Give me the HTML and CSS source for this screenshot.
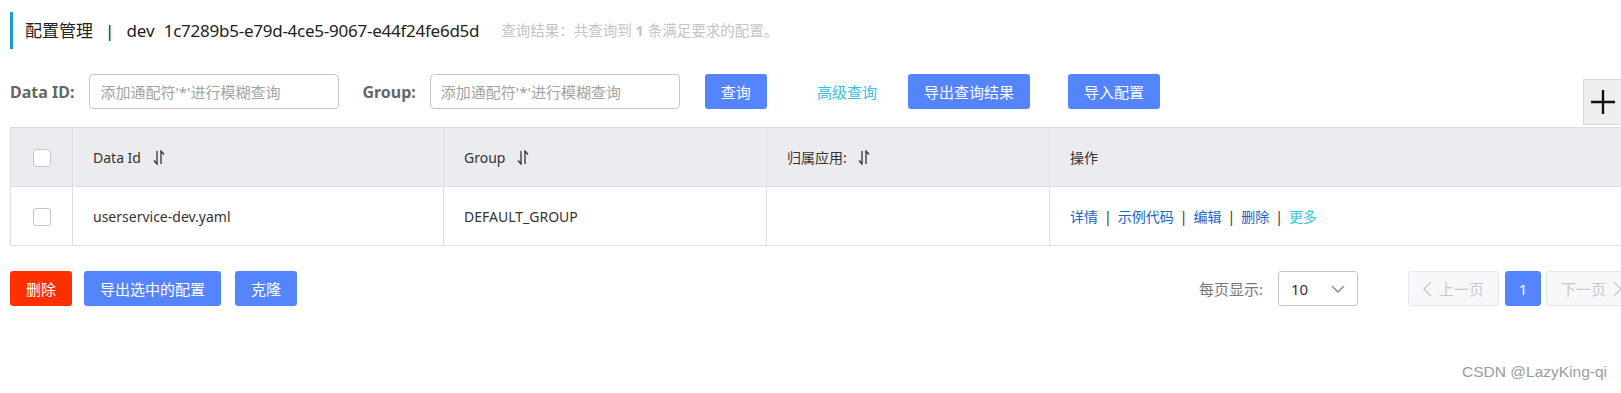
FILE: index.html
```html
<!DOCTYPE html>
<html lang="zh-CN">
<head>
  <meta charset="UTF-8">
  <title>配置管理</title>
  <link rel="stylesheet" href="styles.css">
</head>
<body>
  <div class="page">
    <div class="page-title">
      <span class="title-main">配置管理</span>
      <span class="title-sep">|</span>
      <span class="title-ns">dev</span>
      <span class="title-id">1c7289b5-e79d-4ce5-9067-e44f24fe6d5d</span>
      <span class="title-hint">查询结果：共查询到 <b>1</b> 条满足要求的配置。</span>
    </div>

    <div class="search-row">
      <label class="search-label" for="dataId">Data ID:</label>
      <input class="search-input" id="dataId" type="text" placeholder="添加通配符'*'进行模糊查询">
      <label class="search-label label-group" for="group">Group:</label>
      <input class="search-input" id="group" type="text" placeholder="添加通配符'*'进行模糊查询">
      <button class="btn btn-query">查询</button>
      <a class="link-advanced">高级查询</a>
      <button class="btn btn-export">导出查询结果</button>
      <button class="btn btn-import">导入配置</button>
    </div>

    <table class="config-table">
      <colgroup>
        <col style="width: 62px">
        <col style="width: 371px">
        <col style="width: 323px">
        <col style="width: 283px">
        <col>
      </colgroup>
      <thead>
        <tr>
          <th class="cell-check"><span class="checkbox"></span></th>
          <th>Data Id <svg class="sort-icon" width="12" height="15" viewBox="0 0 12 15"><path d="M4 1V14L1 10.5M8 14V1L11 4.5" fill="none" stroke="#333" stroke-width="1.3"/></svg></th>
          <th>Group <svg class="sort-icon" width="12" height="15" viewBox="0 0 12 15"><path d="M4 1V14L1 10.5M8 14V1L11 4.5" fill="none" stroke="#333" stroke-width="1.3"/></svg></th>
          <th>归属应用: <svg class="sort-icon" width="12" height="15" viewBox="0 0 12 15"><path d="M4 1V14L1 10.5M8 14V1L11 4.5" fill="none" stroke="#333" stroke-width="1.3"/></svg></th>
          <th>操作</th>
        </tr>
      </thead>
      <tbody>
        <tr>
          <td class="cell-check"><span class="checkbox"></span></td>
          <td>userservice-dev.yaml</td>
          <td>DEFAULT_GROUP</td>
          <td></td>
          <td class="ops">
            <a class="op">详情</a><span class="op-sep">|</span><a class="op">示例代码</a><span class="op-sep">|</span><a class="op">编辑</a><span class="op-sep">|</span><a class="op">删除</a><span class="op-sep">|</span><a class="op op-more">更多</a>
          </td>
        </tr>
      </tbody>
    </table>

    <div class="footer-row">
      <button class="btn btn-danger">删除</button>
      <button class="btn btn-export-sel">导出选中的配置</button>
      <button class="btn btn-clone">克隆</button>

      <div class="pager">
        <span class="pager-label">每页显示:</span>
        <div class="page-size">
          <span>10</span>
          <svg width="14" height="8" viewBox="0 0 14 8"><path d="M1 1L7 7L13 1" fill="none" stroke="#888" stroke-width="1.4"/></svg>
        </div>
        <button class="pager-btn pager-prev" disabled>
          <svg width="9" height="16" viewBox="0 0 9 16"><path d="M8 1L1 8L8 15" fill="none" stroke="#c8c9cc" stroke-width="1.4"/></svg>
          上一页
        </button>
        <button class="pager-btn pager-current">1</button>
        <button class="pager-btn pager-next" disabled>
          下一页
          <svg width="9" height="16" viewBox="0 0 9 16"><path d="M1 1L8 8L1 15" fill="none" stroke="#c8c9cc" stroke-width="1.4"/></svg>
        </button>
      </div>
    </div>
  </div>

  <div class="float-add">
    <svg width="26" height="26" viewBox="0 0 26 26"><path d="M13 1V25M1 13H25" stroke="#111" stroke-width="2.4"/></svg>
  </div>

  <div class="watermark">CSDN @LazyKing-qi</div>
</body>
</html>
```

FILE: styles.css
```css
html, body {
  overflow: hidden;
}

body {
  margin: 0;
  font-family: "Noto Sans", "Noto Sans CJK SC", sans-serif;
  color: #333;
  background: #fff;
  position: relative;
  height: 393px;
}

.page {
  width: 1627px;
  padding-left: 10px;
}

/* titre */
.page-title {
  margin-top: 12px;
  height: 37px;
  border-left: 3px solid #1b9dd0;
  padding-left: 12px;
  display: flex;
  align-items: center;
  font-size: 17px;
  line-height: 1;
  color: #222;
}

.title-sep {
  margin: 0 12px;
}

.title-id {
  margin-left: 9px;
  letter-spacing: -0.25px;
}

.title-hint {
  margin-left: 22px;
  font-size: 14.5px;
  color: #c4c4c4;
}

.title-hint b {
  font-weight: bold;
}

/* recherche */
.search-row {
  margin-top: 25px;
  height: 35px;
  display: flex;
  align-items: center;
}

.search-label {
  font-size: 16px;
  font-weight: bold;
  color: #666;
  margin-right: 15px;
}

.label-group {
  margin-left: 23px;
  margin-right: 14px;
}

.search-input {
  width: 250px;
  height: 35px;
  box-sizing: border-box;
  border: 1px solid #c4c6cf;
  border-radius: 4px;
  padding: 0 10px;
  font-family: inherit;
  font-size: 15px;
  color: #333;
  outline: none;
}

.search-input::placeholder {
  color: #a3a3a3;
}

.btn {
  height: 35px;
  border: none;
  border-radius: 3px;
  background-color: #5584ff;
  color: #fff;
  font-family: inherit;
  font-size: 15px;
  padding: 0 16px;
  cursor: pointer;
}

.btn-query {
  margin-left: 25px;
}

.link-advanced {
  margin-left: 50px;
  font-size: 15px;
  color: #34c0e2;
  cursor: pointer;
}

.btn-export {
  margin-left: 31px;
}

.btn-import {
  margin-left: 38px;
}

/* tableau */
.config-table {
  margin-top: 18px;
  width: 1627px;
  table-layout: fixed;
  border-collapse: collapse;
  font-size: 14px;
}

.config-table th,
.config-table td {
  border: 1px solid #dcdee3;
  height: 58px;
  padding: 0 20px;
  text-align: left;
  font-weight: normal;
  color: #333;
}

.config-table th {
  background: #ebecf0;
}

.config-table .cell-check {
  padding: 0;
  text-align: center;
}

.checkbox {
  display: inline-block;
  width: 18px;
  height: 18px;
  box-sizing: border-box;
  border: 1px solid #c4c6cf;
  border-radius: 3px;
  background: #fff;
  vertical-align: middle;
}

.sort-icon {
  margin-left: 8px;
  vertical-align: -2px;
}

.op {
  color: #1765c8;
  cursor: pointer;
}

.op-more {
  color: #35c5e4;
}

.op-sep {
  margin: 0 6px;
  color: #333;
}

/* pied */
.footer-row {
  margin-top: 25px;
  display: flex;
  align-items: center;
}

.btn-danger {
  background-color: #ff3000;
}

.btn-export-sel {
  margin-left: 12px;
}

.btn-clone {
  margin-left: 14px;
}

.pager {
  margin-left: auto;
  display: flex;
  align-items: center;
}

.pager-label {
  font-size: 15px;
  color: #777;
}

.page-size {
  margin-left: 15px;
  width: 80px;
  height: 35px;
  box-sizing: border-box;
  border: 1px solid #c4c6cf;
  border-radius: 3px;
  padding: 0 12px;
  display: flex;
  align-items: center;
  justify-content: space-between;
  font-size: 15px;
  color: #333;
}

.pager-btn {
  height: 35px;
  box-sizing: border-box;
  border: 1px solid #e6e7eb;
  border-radius: 3px;
  background: #f7f8fa;
  color: #c8c9cc;
  font-family: inherit;
  font-size: 15px;
  display: flex;
  align-items: center;
  justify-content: center;
  gap: 7px;
  padding: 0;
}

.pager-prev {
  margin-left: 50px;
  width: 91px;
}

.pager-current {
  margin-left: 6px;
  width: 36px;
  border-color: #5584ff;
  background: #5584ff;
  color: #fff;
}

.pager-next {
  margin-left: 5px;
  width: 91px;
}

/* éléments flottants */
.float-add {
  position: absolute;
  left: 1583px;
  top: 79px;
  width: 40px;
  height: 46px;
  box-sizing: border-box;
  border: 1px solid #d8d8d8;
  background: #efefef;
  display: flex;
  align-items: center;
  justify-content: center;
}

.watermark {
  position: absolute;
  right: 14px;
  top: 363px;
  font-family: "Liberation Sans", Arial, sans-serif;
  font-size: 15.5px;
  color: #9c9c9c;
  text-shadow: 0 0 1px #fff;
}
```
